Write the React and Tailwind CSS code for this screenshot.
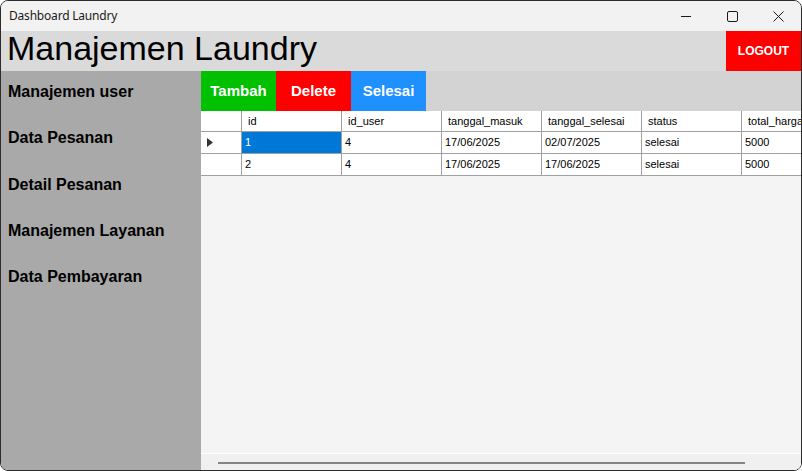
import React from "react";

const columns = ["id", "id_user", "tanggal_masuk", "tanggal_selesai", "status", "total_harga"];

const rows = [
  { id: "1", id_user: "4", tanggal_masuk: "17/06/2025", tanggal_selesai: "02/07/2025", status: "selesai", total_harga: "5000" },
  { id: "2", id_user: "4", tanggal_masuk: "17/06/2025", tanggal_selesai: "17/06/2025", status: "selesai", total_harga: "5000" },
];

const menu = ["Manajemen user", "Data Pesanan", "Detail Pesanan", "Manajemen Layanan", "Data Pembayaran"];

const sans = "font-['Liberation_Sans',Arial,sans-serif]";

const App = () => {
  return (
    <div className={`w-[802px] h-[471px] border border-[#2b2b2b] rounded-[8px] overflow-hidden flex flex-col bg-[#f3f2f2] ${sans}`}>
      {/* title bar */}
      <div className="h-[30px] shrink-0 flex items-center justify-between bg-[#f3f2f2]">
        <span className="pl-[8px] text-[12px] text-[#1a1a1a] font-['Noto_Sans',sans-serif] tracking-[-0.2px]">Dashboard Laundry</span>
        <div className="flex h-full">
          <div className="w-[46px] h-full flex items-center justify-center">
            <svg width="10" height="10" viewBox="0 0 10 10">
              <line x1="0" y1="5.5" x2="10" y2="5.5" stroke="#1a1a1a" strokeWidth="1" />
            </svg>
          </div>
          <div className="w-[46px] h-full flex items-center justify-center">
            <svg width="11" height="11" viewBox="0 0 11 11">
              <rect x="0.5" y="0.5" width="10" height="10" rx="1.5" fill="none" stroke="#1a1a1a" strokeWidth="1" />
            </svg>
          </div>
          <div className="w-[46px] h-full flex items-center justify-center">
            <svg width="11" height="11" viewBox="0 0 11 11">
              <path d="M0.5 0.5 L10.5 10.5 M10.5 0.5 L0.5 10.5" stroke="#1a1a1a" strokeWidth="1" />
            </svg>
          </div>
        </div>
      </div>

      {/* header */}
      <div className="h-[40px] shrink-0 flex justify-between bg-[#dadada]">
        <h1 className="pl-[6px] text-[34px] leading-[34px] text-black">Manajemen Laundry</h1>
        <button className="w-[75px] h-full bg-[#ff0000] text-white font-bold text-[12px]">LOGOUT</button>
      </div>

      {/* body */}
      <div className="flex-1 flex min-h-0">
        <div className="w-[200px] shrink-0 bg-[#a9a9a9] pt-[11px] pl-[7px] flex flex-col gap-[26.25px]">
          {menu.map((m) => (
            <div key={m} className="text-[16px] leading-[20px] font-bold text-black">{m}</div>
          ))}
        </div>

        <div className="flex-1 flex flex-col min-w-0">
          <div className="h-[40px] shrink-0 flex bg-[#d3d3d3]">
            <button className="w-[75px] h-full bg-[#00c000] text-white font-bold text-[15px]">Tambah</button>
            <button className="w-[75px] h-full bg-[#ff0000] text-white font-bold text-[15px]">Delete</button>
            <button className="w-[75px] h-full bg-[#1e90ff] text-white font-bold text-[15px]">Selesai</button>
          </div>

          <div className="flex-1 flex flex-col bg-[#f4f4f4] overflow-hidden text-[11px] text-black">
            <div className="flex">
              <div className="w-[41px] h-[21px] shrink-0 bg-white border-r border-b border-[#a0a0a0]" />
              {columns.map((c) => (
                <div key={c} className="w-[100px] h-[21px] shrink-0 bg-white border-r border-b border-[#a0a0a0] flex items-center pl-[6px]">
                  {c}
                </div>
              ))}
            </div>
            {rows.map((r, i) => (
              <div key={r.id} className="flex">
                <div className="w-[41px] h-[22px] shrink-0 bg-white border-r border-b border-[#a0a0a0] flex items-center pl-[6px]">
                  {i === 0 && (
                    <svg width="6" height="9" viewBox="0 0 6 9">
                      <path d="M0 0 L6 4.5 L0 9 Z" fill="#333" />
                    </svg>
                  )}
                </div>
                {columns.map((c, j) => (
                  <div
                    key={c}
                    className={`w-[100px] h-[22px] shrink-0 border-r border-b border-[#a0a0a0] flex items-center pl-[3px] ${
                      i === 0 && j === 0 ? "bg-[#0078d7] text-white" : "bg-white"
                    }`}
                  >
                    {r[c]}
                  </div>
                ))}
              </div>
            ))}
            <div className="flex-1" />
            <div className="h-[17px] shrink-0 border-t border-white bg-[#f0f0f0] flex items-center pl-[17px]">
              <div className="w-[527px] h-[2px] bg-[#858585] mt-[2px]" />
            </div>
          </div>
        </div>
      </div>
    </div>
  );
};

export default App;
